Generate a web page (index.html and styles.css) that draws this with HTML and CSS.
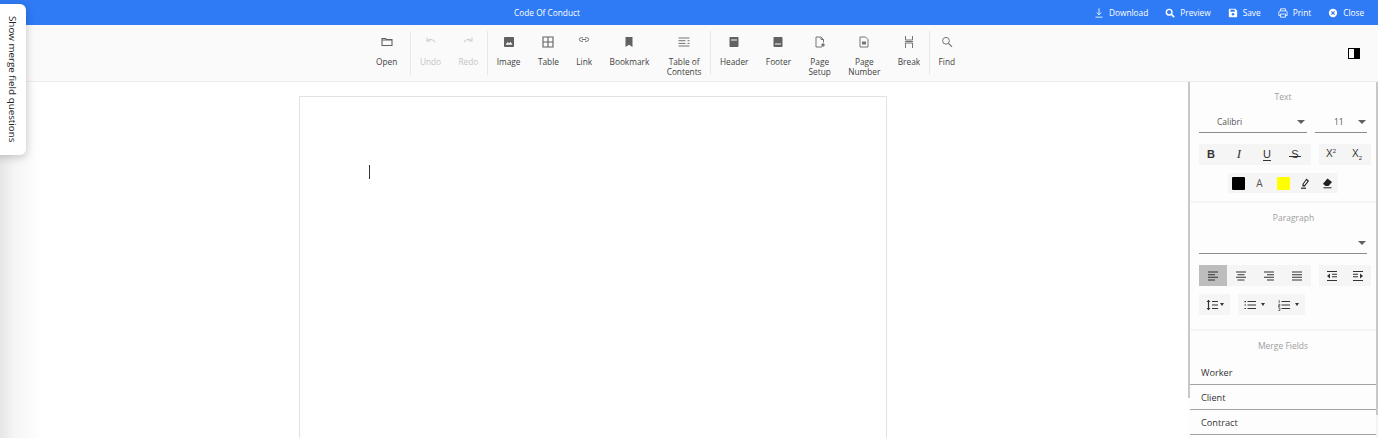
FILE: index.html
```html
<!DOCTYPE html>
<html lang="en">
<head>
<meta charset="utf-8">
<title>Code Of Conduct</title>
<link rel="stylesheet" href="styles.css">
</head>
<body>
<div class="app">
  <header class="topbar">
    <div class="doc-title">Code Of Conduct</div>
    <nav class="actions">
      <span class="action"><svg class="ai" viewBox="0 0 12 12"><path d="M6 .5v7.500M3.200 5.400 6 8.200l2.800-2.800M1.800 11h8.400" fill="none" stroke="#fff" stroke-width="1"/></svg>Download</span>
      <span class="action"><svg class="ai" viewBox="0 0 12 12"><circle cx="5" cy="5" r="3.400" fill="none" stroke="#fff" stroke-width="1.700"/><path d="M7.500 7.500 11 11" stroke="#fff" stroke-width="2"/></svg>Preview</span>
      <span class="action"><svg class="ai" viewBox="0 0 12 12"><path d="M1 2.200C1 1.500 1.500 1 2.200 1h6.600L11 3.200v6.600c0 .7-.5 1.200-1.200 1.200H2.200C1.500 11 1 10.500 1 9.800z" fill="#fff"/><rect x="3" y="2" width="5" height="2.500" fill="#2f7bf6"/><circle cx="6" cy="7.600" r="1.500" fill="#2f7bf6"/></svg>Save</span>
      <span class="action"><svg class="ai" viewBox="0 0 12 12"><path d="M3 3.500V1h6v2.500M3 9H1V5c0-.8.600-1.500 1.500-1.500h7C10.400 3.500 11 4.200 11 5v4H9M3 7.200h6V11H3z" fill="none" stroke="#fff" stroke-width="1"/></svg>Print</span>
      <span class="action"><svg class="ai" viewBox="0 0 12 12"><circle cx="6" cy="6" r="5" fill="#fff"/><path d="M4 4l4 4M8 4l-4 4" stroke="#2f7bf6" stroke-width="1.400"/></svg>Close</span>
    </nav>
  </header>

  <div class="toolbar">
    <div class="tools">
      <div class="tool first"><svg class="ti" viewBox="0 0 12 12"><path d="M1 2.500h3.500l1 1H11v6H1z" fill="none" stroke="#616161" stroke-width="1.100"/><path d="M1 3.500h10v1H1z" fill="#616161"/></svg><span>Open</span></div>
      <i class="sep"></i>
      <div class="tool off"><svg class="ti" viewBox="0 0 12 12"><path d="M2 1.500V5h3.500M2.200 4.800C4.500 2.500 8.500 3 10 6.300" fill="none" stroke="#cfcfcf" stroke-width="1.100"/></svg><span>Undo</span></div>
      <div class="tool off"><svg class="ti" viewBox="0 0 12 12"><path d="M10 1.500V5H6.500M9.800 4.800C7.500 2.500 3.500 3 2 6.300" fill="none" stroke="#cfcfcf" stroke-width="1.100"/></svg><span>Redo</span></div>
      <i class="sep"></i>
      <div class="tool"><svg class="ti" viewBox="0 0 12 12"><rect x="1" y="1" width="10" height="10" rx=".8" fill="#616161"/><path d="M2.500 8.800 4.700 6l1.400 1.500L7.500 5.800l2 3z" fill="#fafafa"/></svg><span>Image</span></div>
      <div class="tool"><svg class="ti" viewBox="0 0 12 12"><path d="M1 1h10v10H1zM6 1v10M1 6h10" fill="none" stroke="#616161" stroke-width="1.100"/></svg><span>Table</span></div>
      <div class="tool"><svg class="ti" viewBox="0 0 12 12"><path d="M5 1.700H3.200a1.800 1.800 0 0 0 0 3.600H5M7 1.700h1.800a1.800 1.800 0 0 1 0 3.600H7M4 3.500h4" fill="none" stroke="#757575" stroke-width="1"/></svg><span>Link</span></div>
      <div class="tool"><svg class="ti" viewBox="0 0 12 12"><path d="M2.500 1h7v10L6 8.800 2.500 11z" fill="#616161"/></svg><span>Bookmark</span></div>
      <div class="tool"><svg class="ti" viewBox="0 0 12 12"><path d="M.5 2h11M.5 4.700h7M.5 7.400h7M.5 10h11M9.500 4.700h2M9.500 7.400h2" fill="none" stroke="#757575" stroke-width="1"/></svg><span>Table of<br>Contents</span></div>
      <i class="sep"></i>
      <div class="tool"><svg class="ti" viewBox="0 0 12 12"><rect x="1.500" y="1" width="9" height="10" rx=".8" fill="#616161"/><rect x="3" y="3.500" width="6" height="1" fill="#fafafa"/></svg><span>Header</span></div>
      <div class="tool"><svg class="ti" viewBox="0 0 12 12"><rect x="1.500" y="1" width="9" height="10" rx=".8" fill="#616161"/><rect x="3" y="7.500" width="6" height="1" fill="#fafafa"/></svg><span>Footer</span></div>
      <div class="tool"><svg class="ti" viewBox="0 0 12 12"><path d="M8 11H2V1h5l2.500 2.500v3M7 1v2.500h2.500" fill="none" stroke="#757575" stroke-width="1"/><circle cx="9" cy="9" r="1.700" fill="#757575"/></svg><span>Page<br>Setup</span></div>
      <div class="tool"><svg class="ti" viewBox="0 0 12 12"><path d="M2 1h5.500L10 3.500V11H2z" fill="none" stroke="#757575" stroke-width="1"/><rect x="4" y="5.500" width="4" height="3" fill="#757575"/></svg><span>Page<br>Number</span></div>
      <div class="tool"><svg class="ti" viewBox="0 0 12 12"><path d="M2.500 0v4h7V0M2.500 12V7h7v5M2 5.500h8" fill="none" stroke="#757575" stroke-width="1"/></svg><span>Break</span></div>
      <i class="sep"></i>
      <div class="tool"><svg class="ti" viewBox="0 0 12 12"><circle cx="5" cy="4.800" r="3.400" fill="none" stroke="#757575" stroke-width="1"/><path d="M7.500 7.300 11 10.800" stroke="#757575" stroke-width="1.200"/></svg><span>Find</span></div>
    </div>
    <div class="toggle"><svg viewBox="0 0 12 11" width="12" height="11"><rect x=".5" y=".5" width="11" height="10" fill="#fff" stroke="#000"/><rect x="6" y="0" width="6" height="11" fill="#000"/></svg></div>
  </div>

  <div class="workspace">
    <main class="canvas">
      <div class="page"><i class="caret"></i></div>
    </main>
    <aside class="panel">
      <section class="pane pane-text">
        <h3 class="pane-title">Text</h3>
        <div class="selects">
          <div class="select font"><span>Calibri</span><b class="tri"></b></div>
          <div class="select size"><span>11</span><b class="tri"></b></div>
        </div>
        <div class="row row-fmt">
          <div class="group g4 shift">
            <span class="b"><span class="gl bold">B</span></span>
            <span class="b"><span class="gl ital">I</span></span>
            <span class="b"><span class="gl und">U</span></span>
            <span class="b"><span class="gl str">S</span></span>
          </div>
          <div class="group g2">
            <span class="b"><span class="gl scr">X<sup>2</sup></span></span>
            <span class="b"><span class="gl scr">X<sub>2</sub></span></span>
          </div>
        </div>
        <div class="row row-color">
          <div class="group colors">
            <span class="c"><i class="sw black"></i></span>
            <span class="c"><span class="gl a">A</span></span>
            <span class="c"><i class="sw yellow"></i></span>
            <span class="c"><svg class="pi" viewBox="0 0 12 12"><path d="M7.500 1.500 10 4 5.800 9.500H3.500V7z" fill="#222"/><path d="M7.500 3.200 8.500 4.200 5.500 8H4.700V7z" fill="#fff"/><path d="M2 11.200h5" stroke="#222" stroke-width="1.200"/></svg></span>
            <span class="c"><svg class="pi" viewBox="0 0 12 12"><path d="M6.500 1.500 11 5 7.500 9H4.500L2 6.800z" fill="#222"/><path d="M2.500 10.800h8" stroke="#222" stroke-width="1"/></svg></span>
          </div>
        </div>
      </section>

      <section class="pane pane-para">
        <h3 class="pane-title para-title">Paragraph</h3>
        <div class="selects"><div class="select style"><span></span><b class="tri"></b></div></div>
        <div class="row row-align">
          <div class="group g4">
            <span class="b on"><svg class="pi" viewBox="0 0 12 12"><path d="M1 2h10M1 4.700h7M1 7.300h10M1 10h7" stroke="#333" stroke-width="1.100"/></svg></span>
            <span class="b"><svg class="pi" viewBox="0 0 12 12"><path d="M1 2h10M2.500 4.700h7M1 7.300h10M2.500 10h7" stroke="#333" stroke-width="1.100"/></svg></span>
            <span class="b"><svg class="pi" viewBox="0 0 12 12"><path d="M1 2h10M4 4.700h7M1 7.300h10M4 10h7" stroke="#333" stroke-width="1.100"/></svg></span>
            <span class="b"><svg class="pi" viewBox="0 0 12 12"><path d="M1 2h10M1 4.700h10M1 7.300h10M1 10h10" stroke="#333" stroke-width="1.100"/></svg></span>
          </div>
          <div class="group g2">
            <span class="b"><svg class="pi" viewBox="0 0 12 12"><path d="M1 1.500h10M6 4.200h5M6 6.800h5M1 10.500h10" stroke="#333" stroke-width="1.100"/><path d="M4 3.500v5L1 6z" fill="#333"/></svg></span>
            <span class="b"><svg class="pi" viewBox="0 0 12 12"><path d="M1 1.500h10M1 4.200h5M1 6.800h5M1 10.500h10" stroke="#333" stroke-width="1.100"/><path d="M8 3.500v5L11 6z" fill="#333"/></svg></span>
          </div>
        </div>
        <div class="row row-list">
          <div class="group spacing"><svg class="pi" viewBox="0 0 12 12"><path d="M2.500 1.500v9" stroke="#333" stroke-width="1.200"/><path d="M.5 3 2.500 .8 4.500 3zM.5 9 2.500 11.200 4.500 9z" fill="#333"/><path d="M6 2.500h6M6 6h6M6 9.500h6" stroke="#333" stroke-width="1.100"/></svg><b class="mini"></b></div>
          <div class="group lists">
            <span class="l"><svg class="pi" viewBox="0 0 12 12"><path d="M3.500 2.500H12M3.500 6H12M3.500 9.500H12" stroke="#333" stroke-width="1"/><path d="M.5 2h1.500v1.200H.5zM.5 5.400h1.500v1.200H.5zM.5 8.900h1.500v1.200H.5z" fill="#333"/></svg><b class="mini"></b></span>
            <span class="l"><svg class="pi" viewBox="0 0 12 12"><path d="M3.500 2.500H12M3.500 6H12M3.500 9.500H12" stroke="#333" stroke-width="1"/><path d="M1.200 1v3M.3 5.300h1.600v1.300H.5v1.200h1.600M.3 9h1.600v2.500H.3" fill="none" stroke="#333" stroke-width=".7"/></svg><b class="mini"></b></span>
          </div>
        </div>
      </section>

      <section class="pane pane-merge">
        <h3 class="pane-title">Merge Fields</h3>
        <ul class="fields">
          <li>Worker</li>
          <li>Client</li>
          <li>Contract</li>
        </ul>
      </section>
    </aside>
  </div>

  <button class="merge-tab">Show merge field questions</button>
</div>
</body>
</html>
```
FILE: styles.css
```css
* { box-sizing: border-box; }
html, body { margin: 0; height: 100%; overflow: hidden; }
body { font-family: "Open Sans", "Liberation Sans", sans-serif; font-size: 8.300px; color: #424242; background: #fff; }
.app { position: relative; height: 438px; display: flex; flex-direction: column; }

.topbar { height: 25px; flex: none; display: flex; align-items: center; background: #2f7bf6; color: #fff; }
.doc-title { flex: 1; text-align: center; }
.actions { width: 284px; flex: none; display: flex; gap: 17px; }
.action { display: flex; align-items: center; gap: 5px; }
.ai { width: 10px; height: 10px; }

.toolbar { height: 57px; flex: none; display: flex; background: #fafafa; border-bottom: 1px solid #ececec; }
.tools { flex: 1; display: flex; justify-content: center; align-items: flex-start; padding-top: 6px; }
.tool { padding: 0 8.700px; display: flex; flex-direction: column; align-items: center; text-align: center; line-height: 10px; }
.tool.first { padding-right: 13px; }
.tool .ti { width: 12px; height: 12px; margin: 5px 0 9px; }
.tool.off { color: #c4c4c4; }
.sep { width: 1px; height: 44px; background: #e8e8e8; flex: none; }
.toggle { width: 47px; flex: none; display: flex; align-items: center; justify-content: center; padding: 1px 2px 0 0; }

.workspace { flex: 1; min-height: 0; display: flex; }
.canvas { flex: 1; min-width: 0; padding: 14px 0 0 299px; background: linear-gradient(90deg, #e6e6e6 0, #f5f5f5 14px, #fff 42px); overflow: hidden; }
.page { width: 588px; height: 400px; background: #fff; border: 1px solid #e2e2e2; padding: 68px 0 0 69px; }
.caret { display: block; width: 1px; height: 14px; background: #333; }

.panel { width: 190px; flex: none; padding: 0 2px; background: linear-gradient(#c8c8c8, #c8c8c8) 0 0 / 2px 316px no-repeat, linear-gradient(#c8c8c8, #c8c8c8) 100% 0 / 2px 333px no-repeat, linear-gradient(#f3f3f3, #f3f3f3) 100% 0 / 2px 100% no-repeat, #fdfdfd; overflow: hidden; }
.pane { border-bottom: 2px solid #f5f5f5; }
.pane-text { height: 121px; }
.pane-para { height: 128px; }
.pane-merge { border-bottom: 0; }
.pane-title { margin: 0; text-align: center; font-weight: 400; font-size: 8.500px; line-height: 12px; color: #9e9e9e; padding-top: 9px; }
.para-title { padding-left: 21px; }
.selects { display: flex; gap: 8px; margin: 0 0 0 9px; padding-top: 8px; }
.select { height: 22px; border-bottom: 1px solid #8c8c8c; display: flex; align-items: center; justify-content: space-between; color: #555; padding-bottom: 1px; font-size: 8.500px; }
.select.font { width: 108px; padding: 0 2px 0 18px; }
.select.size { width: 52px; padding: 0 1px 0 19px; }
.select.style { width: 168px; padding: 0 1px 0 0; }
.tri { width: 0; height: 0; border: 4.500px solid transparent; border-top: 4.500px solid #616161; border-bottom: 0; }
.row { display: flex; gap: 8px; padding-left: 9px; }
.row-fmt { margin-top: 11px; }
.row-color { margin-top: 8px; padding-left: 38px; }
.row-align { margin-top: 11px; }
.row-list { margin-top: 8px; }
.group { display: flex; background: #f5f5f5; }
.g4 .b { width: 28px; height: 21px; }
.g2 .b { width: 26px; height: 21px; }
.shift .b { padding: 0 4px 2px 0; }
.g2 .gl { position: relative; left: -1px; top: -1px; }
.b, .c, .l { display: flex; align-items: center; justify-content: center; color: #333; }
.b.on { background: #bdbdbd; }
.gl { font-size: 11px; line-height: 12px; }
.bold { font-weight: 700; font-family: "Liberation Sans", sans-serif; }
.ital { font-style: italic; font-family: "Liberation Serif", serif; font-size: 13px; }
.und { text-decoration: underline; text-underline-offset: 2px; font-family: "Liberation Sans", sans-serif; }
.str { position: relative; font-family: "Liberation Sans", sans-serif; }
.str::after { content: ""; position: absolute; left: -2px; right: -2px; top: 8px; height: 1px; background: #333; }
.scr { font-size: 10px; font-family: "Liberation Sans", sans-serif; }
.scr sup, .scr sub { font-size: 6px; line-height: 0; }
.colors { height: 20px; width: 110px; }
.c { width: 22px; height: 20px; }
.sw { display: block; width: 13px; height: 13px; border-radius: 1px; }
.black { background: #000; margin-right: 2px; }
.yellow { background: #ff0; }
.a { font-size: 10px; color: #555; margin-right: 3px; }
.pi { width: 12px; height: 12px; display: block; }
.spacing { width: 31px; height: 21px; align-items: center; justify-content: center; gap: 2px; }
.lists { width: 67px; height: 21px; align-items: center; }
.l { width: 33.500px; gap: 5px; }
.mini { width: 0; height: 0; border: 2.500px solid transparent; border-top: 3px solid #333; border-bottom: 0; }

.fields { list-style: none; margin: 8px 0 0 0; padding: 0; }
.fields li { height: 25px; line-height: 26px; padding-left: 11px; border-bottom: 1px solid #a3a3a3; color: #333; font-size: 9.200px; font-weight: 500; }

.merge-tab { position: absolute; left: -6px; top: 4px; width: 32px; height: 151px; padding: 0 0 0 5px; border: 0; border-radius: 6px; background: #fff; box-shadow: 0 2px 10px rgba(0,0,0,.22); font: 400 9.800px "Open Sans", sans-serif; color: #222; writing-mode: vertical-rl; text-align: center; }
```
